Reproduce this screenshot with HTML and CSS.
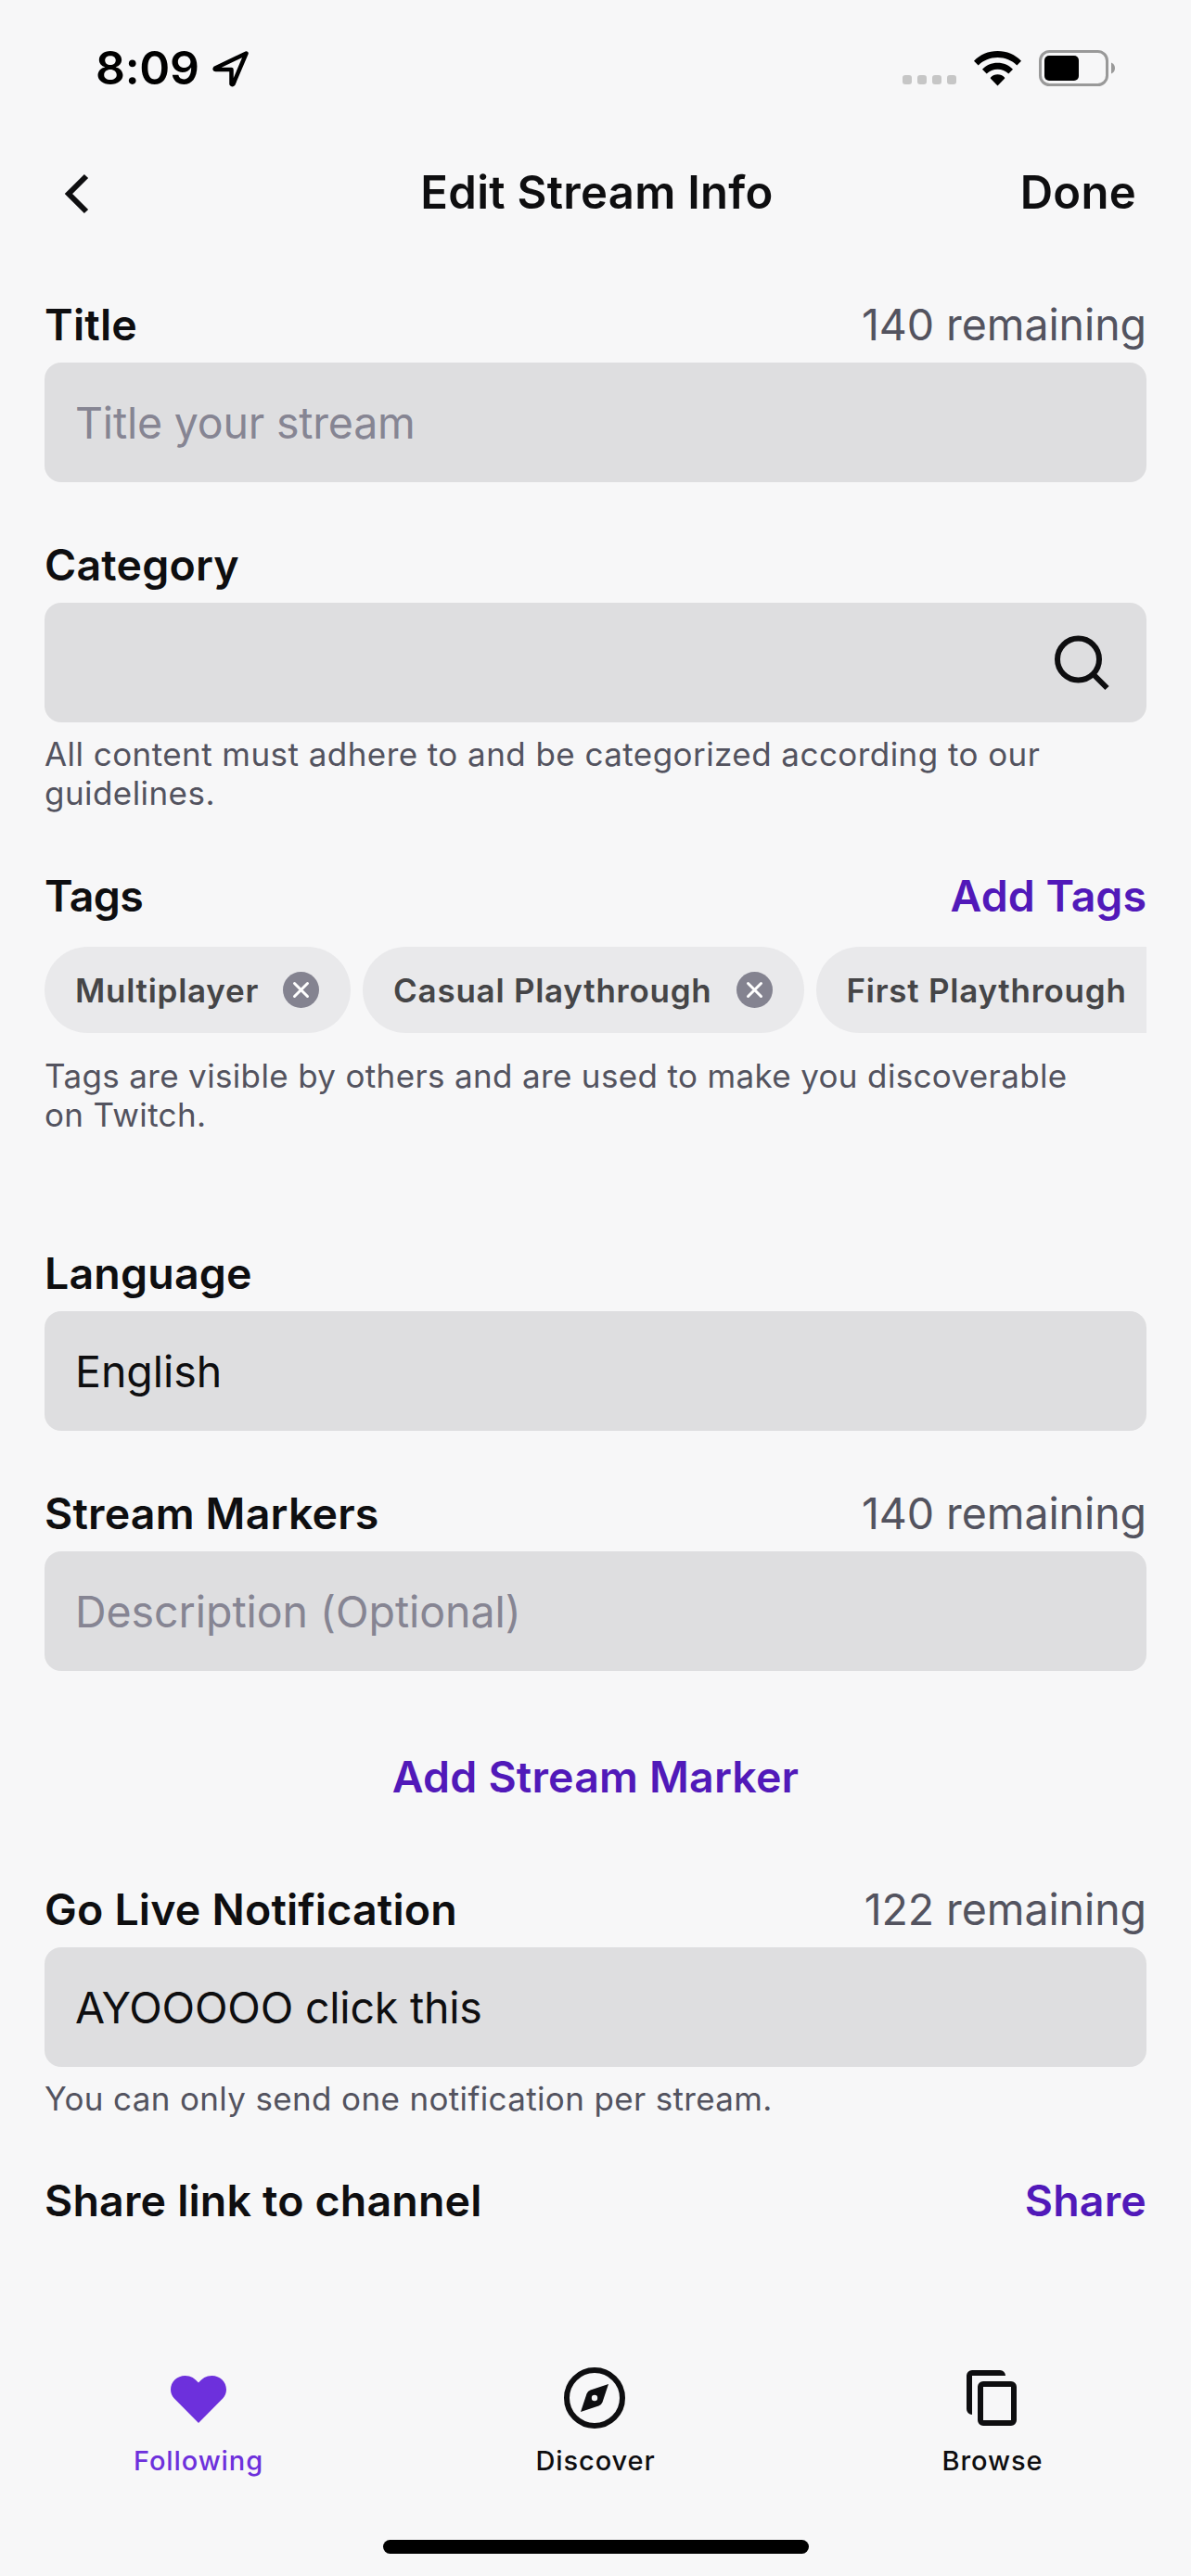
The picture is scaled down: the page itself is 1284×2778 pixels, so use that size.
FILE: index.html
```html
<!DOCTYPE html>
<html lang="en">
<head>
    <meta charset="UTF-8">
    <meta name="viewport" content="width=device-width, initial-scale=1.0">
    <title>Edit Stream Info</title>
    <link rel="stylesheet" href="styles.css">
</head>
<body>
<div class="screen">
    <div class="status-bar">
        <div class="status-left">
            <span class="time">8:09</span>
            <svg class="location-icon" width="42" height="42" viewBox="0 0 42 42">
                <path d="M37.500 4.500 4 20.500Q3 22 4.500 22H21.500V37.500Q22.500 39 23.500 37.500Z" fill="none" stroke="#000" stroke-width="4.500" stroke-linejoin="round"/>
            </svg>
        </div>
        <div class="status-right">
            <div class="signal"><i></i><i></i><i></i><i></i></div>
            <svg class="wifi-icon" width="51" height="38" viewBox="0 0 51 38">
                <path d="M25.500 0C35.500 0 44.500 4 51 10.700L46.300 15.500C40.900 10 33.500 7 25.500 7S10.100 10 4.700 15.500L0 10.700C6.500 4 15.500 0 25.500 0Z"/>
                <path d="M25.500 12.700C31.900 12.700 37.800 15.300 42 19.700L37.300 24.400C34.200 21.400 30 19.700 25.500 19.700S16.800 21.400 13.700 24.400L9 19.700C13.200 15.300 19.100 12.700 25.500 12.700Z"/>
                <path d="M25.500 25.300C28.400 25.300 31 26.500 33 28.500Q33.500 29.200 33 29.800L25.500 37.500 18 29.800Q17.500 29.200 18 28.500C20 26.500 22.600 25.300 25.500 25.300Z"/>
            </svg>
            <svg class="battery-icon" width="84" height="40" viewBox="0 0 84 40">
                <rect x="1.500" y="1.500" width="72" height="36" rx="10" fill="none" stroke="#999" stroke-width="3"/>
                <rect x="6" y="6" width="37" height="27" rx="5" fill="#000"/>
                <path d="M78 13.500C80.500 14.500 82 16.800 82 19.500S80.500 24.500 78 25.500Z" fill="#999"/>
            </svg>
        </div>
    </div>

    <header class="header">
        <button class="back-button" aria-label="Back">
            <svg width="40" height="48" viewBox="0 0 40 48">
                <path d="M31 5 12 24 31 43" fill="none" stroke="#0e0e10" stroke-width="6"/>
            </svg>
        </button>
        <h1>Edit Stream Info</h1>
        <button class="done-button">Done</button>
    </header>

    <main class="form">
        <section class="group">
            <div class="label-row">
                <h2>Title</h2>
                <span class="counter">140 remaining</span>
            </div>
            <div class="field placeholder tight">Title your stream</div>
        </section>

        <section class="group category">
            <div class="label-row">
                <h2>Category</h2>
            </div>
            <div class="field search">
                <svg width="64" height="66" viewBox="0 0 64 66">
                    <circle cx="28.500" cy="29" r="22.500" fill="none" stroke="#0e0e10" stroke-width="6"/>
                    <path d="M44 44.500 59.500 60" fill="none" stroke="#0e0e10" stroke-width="6"/>
                </svg>
            </div>
            <p class="hint">All content must adhere to and be categorized according to our guidelines.</p>
        </section>

        <section class="group tags">
            <div class="label-row">
                <h2>Tags</h2>
                <button class="link">Add Tags</button>
            </div>
            <div class="chips">
                <div class="chip">
                    <span>Multiplayer</span>
                    <svg width="39" height="39" viewBox="0 0 39 39">
                        <circle cx="19.500" cy="19.500" r="19.500" fill="#848390"/>
                        <path d="M12.500 12.500 26.500 26.500M26.500 12.500 12.500 26.500" stroke="#fff" stroke-width="3" stroke-linecap="round"/>
                    </svg>
                </div>
                <div class="chip">
                    <span>Casual Playthrough</span>
                    <svg width="39" height="39" viewBox="0 0 39 39">
                        <circle cx="19.500" cy="19.500" r="19.500" fill="#848390"/>
                        <path d="M12.500 12.500 26.500 26.500M26.500 12.500 12.500 26.500" stroke="#fff" stroke-width="3" stroke-linecap="round"/>
                    </svg>
                </div>
                <div class="chip">
                    <span>First Playthrough</span>
                    <svg width="39" height="39" viewBox="0 0 39 39">
                        <circle cx="19.500" cy="19.500" r="19.500" fill="#848390"/>
                        <path d="M12.500 12.500 26.500 26.500M26.500 12.500 12.500 26.500" stroke="#fff" stroke-width="3" stroke-linecap="round"/>
                    </svg>
                </div>
            </div>
            <p class="hint">Tags are visible by others and are used to make you discoverable on Twitch.</p>
        </section>

        <section class="group language">
            <div class="label-row">
                <h2>Language</h2>
            </div>
            <div class="field">English</div>
        </section>

        <section class="group">
            <div class="label-row">
                <h2>Stream Markers</h2>
                <span class="counter">140 remaining</span>
            </div>
            <div class="field placeholder">Description (Optional)</div>
            <button class="link add-marker">Add Stream Marker</button>
        </section>

        <section class="group">
            <div class="label-row">
                <h2>Go Live Notification</h2>
                <span class="counter">122 remaining</span>
            </div>
            <div class="field tight">AYOOOOO click this</div>
            <p class="hint">You can only send one notification per stream.</p>
        </section>

        <section class="group">
            <div class="label-row">
                <h2>Share link to channel</h2>
                <button class="link">Share</button>
            </div>
        </section>
    </main>

    <nav class="tab-bar">
        <a class="tab active">
            <svg width="72" height="72" viewBox="0 0 72 72">
                <path d="M36 63 9.800 36.600C7.500 34 6 31 6 27 6 18.500 13 12 21.500 12 28 12 32 15 36 19.600 40 15 44 12 50.500 12 59 12 66 18.500 66 27 66 31 64.500 34 62.200 36.600Z" fill="#6d30dc"/>
            </svg>
            <span>Following</span>
        </a>
        <a class="tab">
            <svg width="72" height="72" viewBox="0 0 72 72">
                <circle cx="35" cy="36" r="30" fill="none" stroke="#0e0e10" stroke-width="6"/>
                <path d="M20 51 26.500 31.500Q27.600 28.600 30.500 27.500L50 21 43.500 40.500Q42.400 43.400 39.500 44.500Z" fill="#0e0e10"/>
                <circle cx="35" cy="36" r="3.200" fill="#f7f7f8"/>
            </svg>
            <span>Discover</span>
        </a>
        <a class="tab">
            <svg width="72" height="72" viewBox="0 0 72 72">
                <path d="M14 6H44a6 6 0 0 1 6 6H14V54a6 6 0 0 1-6-6V12a6 6 0 0 1 6-6Z" fill="#0e0e10"/>
                <rect x="23" y="21" width="36" height="42" rx="3" fill="none" stroke="#0e0e10" stroke-width="6"/>
            </svg>
            <span>Browse</span>
        </a>
    </nav>
    <div class="home-indicator"></div>
</div>
</body>
</html>
```
FILE: styles.css
```css
* {
    box-sizing: border-box;
}

body {
    margin: 0;
    background: #f7f7f8;
    font-family: Inter, "Liberation Sans", sans-serif;
    color: #0e0e10;
}

h1, h2, p {
    margin: 0;
}

button {
    padding: 0;
    background: none;
    border: none;
    font-family: inherit;
    color: inherit;
    cursor: pointer;
}

svg {
    display: block;
    flex-shrink: 0;
}

.screen {
    display: flex;
    flex-direction: column;
    width: 1284px;
    height: 2778px;
    overflow: hidden;
}

/* Status bar */
.status-bar {
    display: flex;
    justify-content: space-between;
    align-items: center;
    height: 147px;
    padding: 0 80px 0 103px;
    color: #000000;
}

.status-left, .status-right {
    display: flex;
    align-items: center;
}

.time {
    font-size: 50px;
    font-weight: 600;
    letter-spacing: -0.3px;
    padding-bottom: 2px;
}

.location-icon {
    margin-left: 13px;
}

.signal {
    display: flex;
    gap: 6px;
    margin: 25px 19px 0 0;
}

.signal i {
    width: 10px;
    height: 10px;
    border-radius: 3px;
    background: #c6c6c6;
}

.wifi-icon {
    margin-right: 19px;
}

/* Header */
.header {
    display: grid;
    grid-template-columns: 1fr auto 1fr;
    align-items: center;
    height: 120px;
    padding: 0 59px 0 62px;
}

.header h1, .done-button {
    font-size: 49px;
    font-weight: 600;
    letter-spacing: 0.3px;
}

.back-button {
    justify-self: start;
    padding-top: 3px;
}

.done-button {
    justify-self: end;
}

/* Form */
.form {
    flex: 1;
    padding: 43px 48px 0;
}

.group {
    margin-bottom: 49px;
}

.label-row {
    display: flex;
    justify-content: space-between;
    align-items: center;
    height: 81px;
    padding-bottom: 1px;
}

.label-row h2, .link {
    font-size: 46.5px;
    font-weight: 600;
    letter-spacing: 0.18px;
}

.link {
    color: #5119b9;
}

.counter {
    font-size: 46.5px;
    letter-spacing: -0.08px;
    color: #53535f;
}

.field {
    display: flex;
    align-items: center;
    height: 129px;
    padding: 0 33px;
    border-radius: 18px;
    background: #dedee0;
    font-size: 46.5px;
    letter-spacing: -0.05px;
}

.field.placeholder {
    color: #868593;
}

.field.tight {
    letter-spacing: -0.2px;
}

.field.search {
    justify-content: flex-end;
    padding-right: 38px;
}

.hint {
    padding-top: 13px;
    font-size: 35px;
    line-height: 42px;
    letter-spacing: 0.35px;
    color: #53535f;
}

.category .hint {
    letter-spacing: 0.44px;
}

.tags {
    margin-top: 50px;
}

.tags .label-row h2 {
    letter-spacing: -0.6px;
}

.tags .link {
    letter-spacing: 0;
}

.tags .hint {
    padding-top: 25px;
    max-width: 1140px;
}

.chips {
    display: flex;
    gap: 13px;
    margin-top: 14px;
    overflow: hidden;
}

.chip {
    display: flex;
    flex-shrink: 0;
    align-items: center;
    gap: 26px;
    height: 93px;
    padding: 0 34px 0 33px;
    border-radius: 47px;
    background: #e9e9eb;
    font-size: 35px;
    font-weight: 600;
    letter-spacing: 0.74px;
    color: #454547;
}

.group.language {
    margin-top: 110px;
}

.add-marker {
    display: block;
    width: 100%;
    height: 81px;
    margin: 73px 0 63px;
}

/* Bottom tabs */
.tab-bar {
    display: grid;
    grid-template-columns: repeat(3, 1fr);
    height: 189px;
}

.tab {
    display: flex;
    flex-direction: column;
    align-items: center;
    gap: 14px;
    font-size: 29px;
    line-height: 36px;
    font-weight: 500;
    letter-spacing: 0.9px;
}

.tab.active {
    color: #6d30dc;
}

.home-indicator {
    width: 459px;
    height: 15px;
    margin: 0 auto 24px;
    border-radius: 8px;
    background: #000000;
}
```
